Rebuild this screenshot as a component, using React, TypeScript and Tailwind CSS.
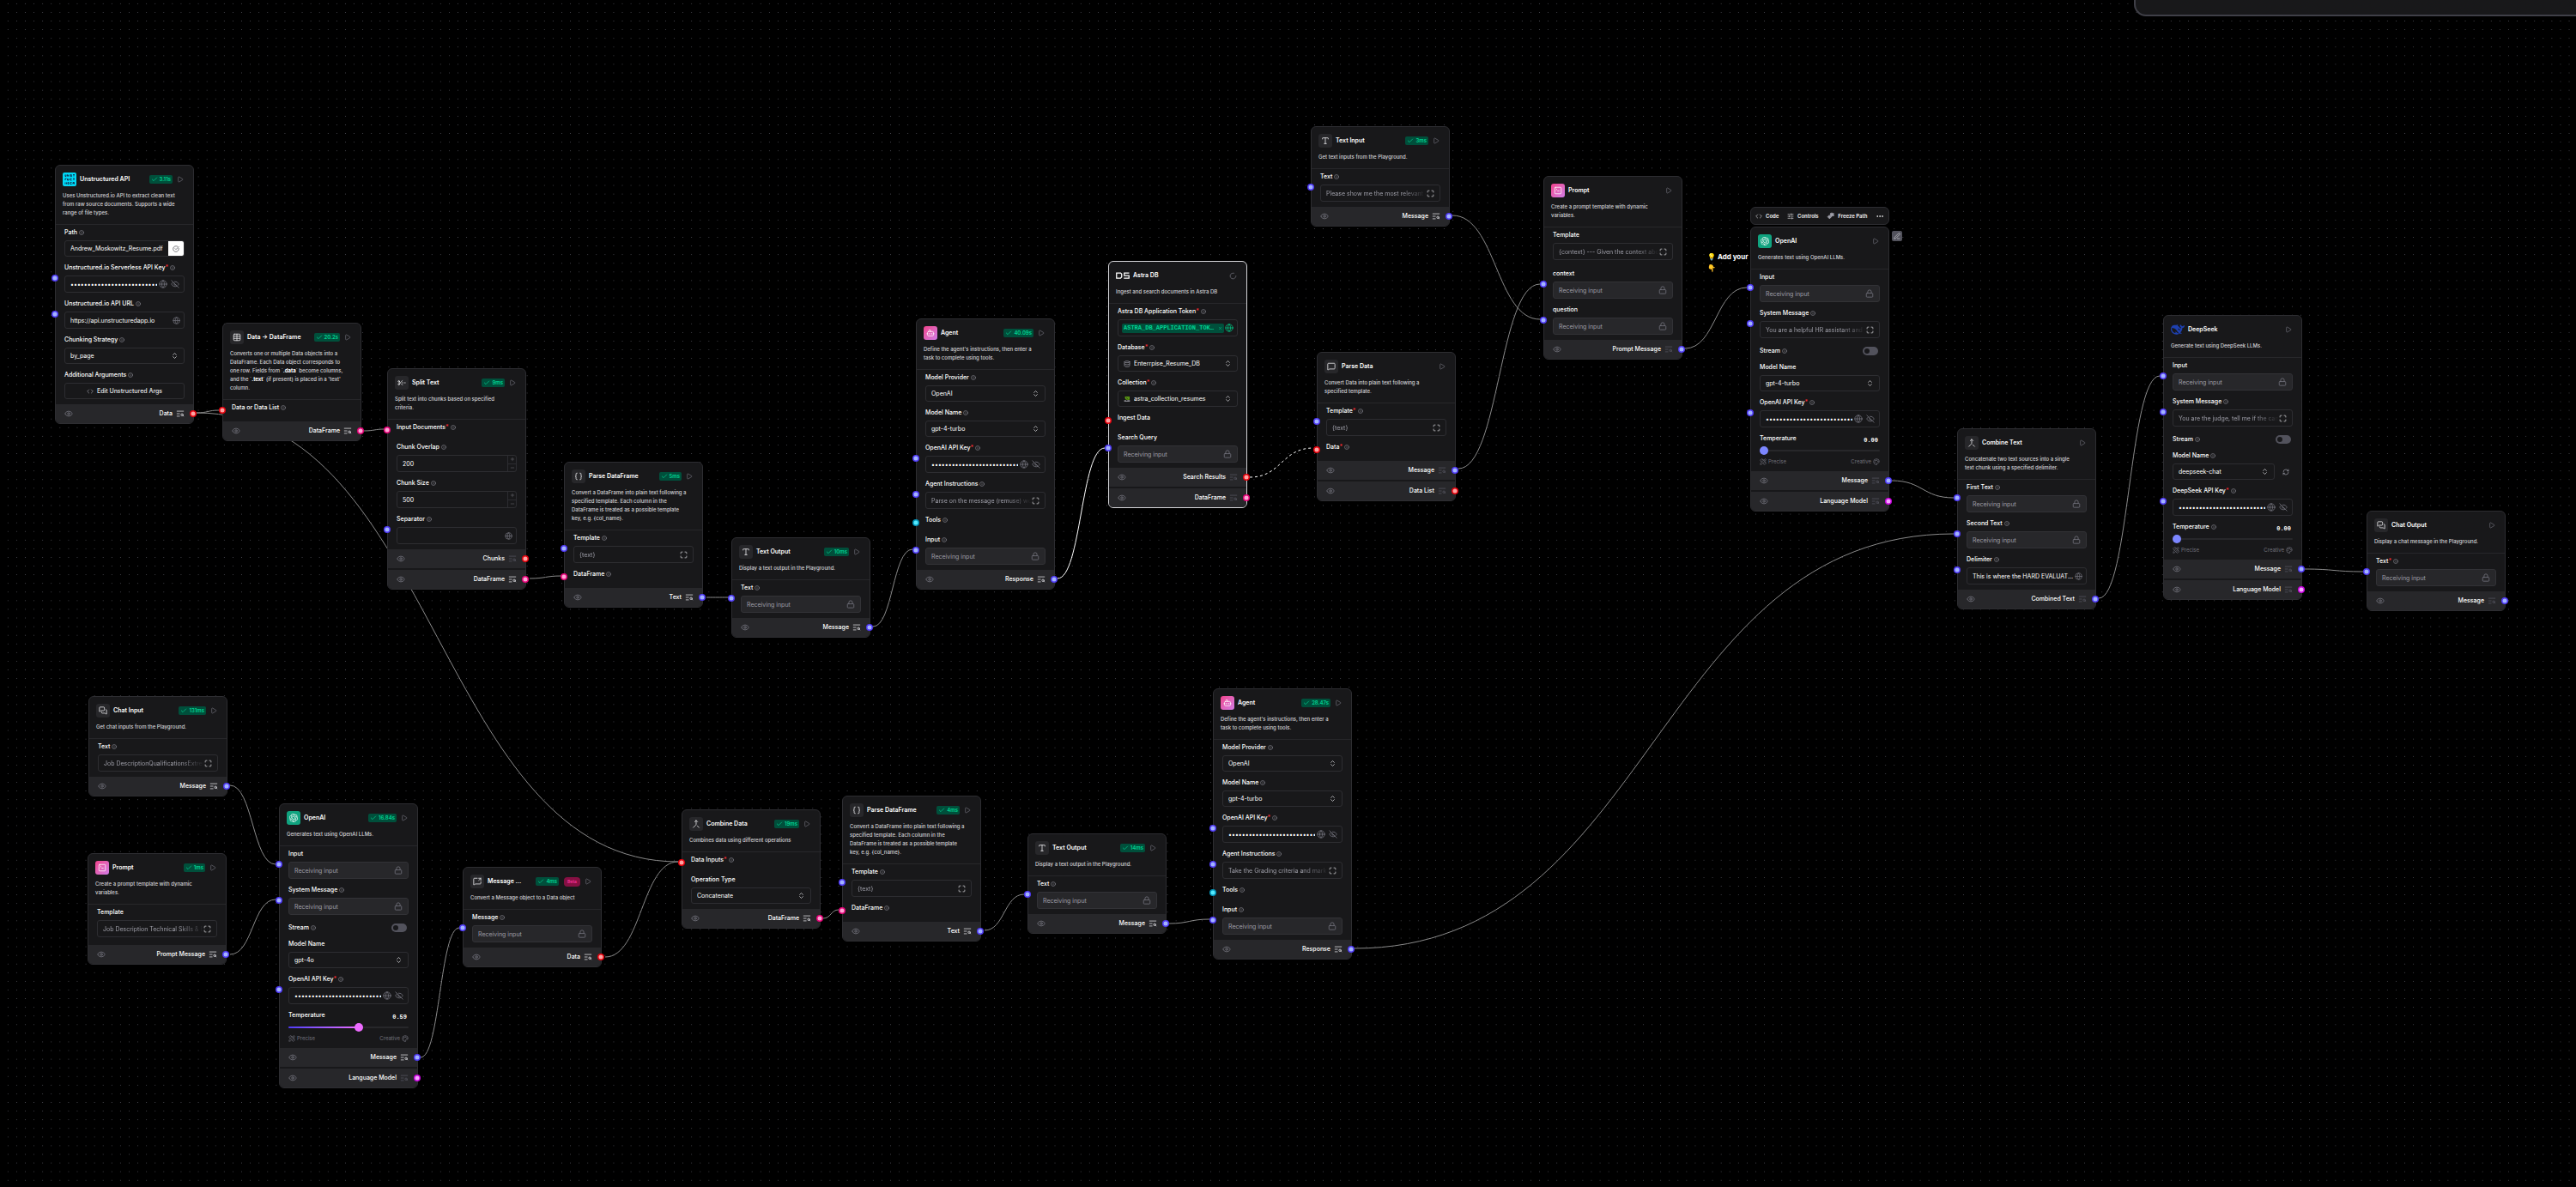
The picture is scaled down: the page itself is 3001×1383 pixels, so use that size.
import React, { useId } from "react";
import {
  Bot,
  Braces,
  Check,
  ChevronsUpDown,
  CircleCheckBig,
  Code,
  Database,
  Ellipsis,
  Eye,
  EyeOff,
  Globe,
  Info,
  LoaderCircle,
  Lock,
  Maximize,
  Merge,
  MessageSquare,
  MessageSquareShare,
  MessagesSquare,
  Minus,
  Palette,
  PencilRuler,
  PenLine,
  Play,
  Plus,
  RefreshCw,
  ScissorsLineDashed,
  SlidersHorizontal,
  SquareTerminal,
  Table,
  TextSearch,
  Type,
  X,
} from "lucide-react";
import { SiOpenai } from "react-icons/si";

type Tone = "indigo" | "red" | "pink" | "cyan" | "fuchsia";

type Field = {
  kind:
    | "port"
    | "receiving"
    | "text"
    | "preview"
    | "template"
    | "select"
    | "secret"
    | "file"
    | "number"
    | "args"
    | "token"
    | "toggle"
    | "slider";
  label: string;
  value?: string;
  handle?: Tone;
  info?: boolean;
  required?: boolean;
  icon?: "database" | "collection";
  refresh?: boolean;
};

type Output = { label: string; tone: Tone; active?: boolean };

type FlowNode = {
  id: string;
  x: number;
  y: number;
  title: string;
  icon: string;
  description: React.ReactNode[];
  time?: string;
  beta?: boolean;
  running?: boolean;
  fields: Field[];
  outputs: Output[];
};

const TONES: Record<Tone, string> = {
  indigo: "fill-indigo-300 stroke-indigo-600",
  red: "fill-red-300 stroke-red-600",
  pink: "fill-pink-300 stroke-pink-600",
  cyan: "fill-cyan-300 stroke-cyan-600",
  fuchsia: "fill-fuchsia-300 stroke-fuchsia-600",
};

const agentFields = (instructions: string): Field[] => [
  { kind: "select", label: "Model Provider", value: "OpenAI", info: true },
  { kind: "select", label: "Model Name", value: "gpt-4-turbo", info: true },
  { kind: "secret", label: "OpenAI API Key", required: true, info: true, handle: "indigo" },
  { kind: "preview", label: "Agent Instructions", value: instructions, info: true, handle: "indigo" },
  { kind: "port", label: "Tools", info: true, handle: "cyan" },
  { kind: "receiving", label: "Input", info: true, handle: "indigo" },
];

const parseFrameDescription = [
  "Convert a DataFrame into plain text following a",
  "specified template. Each column in the",
  "DataFrame is treated as a possible template",
  "key, e.g. {col_name}.",
];

const parseFrameFields: Field[] = [
  { kind: "preview", label: "Template", value: "{text}", info: true, handle: "indigo" },
  { kind: "port", label: "DataFrame", info: true, handle: "pink" },
];

const modelOutputs = (active: boolean): Output[] => [
  { label: "Message", tone: "indigo", active },
  { label: "Language Model", tone: "fuchsia" },
];

const NODES: FlowNode[] = [
  {
    id: "unstructured", x: 64, y: 192, title: "Unstructured API", icon: "unstructured", time: "3.11s",
    description: [
      "Uses Unstructured.io API to extract clean text",
      "from raw source documents. Supports a wide",
      "range of file types.",
    ],
    fields: [
      { kind: "file", label: "Path", value: "Andrew_Moskowitz_Resume.pdf", info: true },
      { kind: "secret", label: "Unstructured.io Serverless API Key", required: true, info: true, handle: "indigo" },
      { kind: "text", label: "Unstructured.io API URL", value: "https://api.unstructuredapp.io", info: true, handle: "indigo" },
      { kind: "select", label: "Chunking Strategy", value: "by_page", info: true },
      { kind: "args", label: "Additional Arguments", value: "Edit Unstructured Args", info: true },
    ],
    outputs: [{ label: "Data", tone: "red", active: true }],
  },
  {
    id: "to-frame", x: 259, y: 376, title: "Data → DataFrame", icon: "table", time: "20.2s",
    description: [
      "Converts one or multiple Data objects into a",
      "DataFrame. Each Data object corresponds to",
      <>one row. Fields from `<code className="font-[Inter] font-bold text-white">.data</code>` become columns,</>,
      <>and the `<code className="font-[Inter] font-bold text-white">.text</code>` (if present) is placed in a 'text'</>,
      "column.",
    ],
    fields: [{ kind: "port", label: "Data or Data List", info: true, handle: "red" }],
    outputs: [{ label: "DataFrame", tone: "pink", active: true }],
  },
  {
    id: "split", x: 451, y: 429, title: "Split Text", icon: "split", time: "9ms",
    description: ["Split text into chunks based on specified", "criteria."],
    fields: [
      { kind: "port", label: "Input Documents", required: true, info: true, handle: "pink" },
      { kind: "number", label: "Chunk Overlap", value: "200", info: true },
      { kind: "number", label: "Chunk Size", value: "500", info: true },
      { kind: "text", label: "Separator", value: "", info: true, handle: "indigo" },
    ],
    outputs: [
      { label: "Chunks", tone: "red" },
      { label: "DataFrame", tone: "pink", active: true },
    ],
  },
  {
    id: "parse-frame", x: 657, y: 538, title: "Parse DataFrame", icon: "braces", time: "5ms",
    description: parseFrameDescription,
    fields: parseFrameFields,
    outputs: [{ label: "Text", tone: "indigo", active: true }],
  },
  {
    id: "text-output", x: 852, y: 626, title: "Text Output", icon: "type", time: "10ms",
    description: ["Display a text output in the Playground."],
    fields: [{ kind: "receiving", label: "Text", info: true, handle: "indigo" }],
    outputs: [{ label: "Message", tone: "indigo", active: true }],
  },
  {
    id: "agent", x: 1067, y: 371, title: "Agent", icon: "bot", time: "40.09s",
    description: ["Define the agent's instructions, then enter a", "task to complete using tools."],
    fields: agentFields("Parse on the message (remuse) work"),
    outputs: [{ label: "Response", tone: "indigo", active: true }],
  },
  {
    id: "astra", x: 1291, y: 304, title: "Astra DB", icon: "astra", running: true,
    description: ["Ingest and search documents in Astra DB"],
    fields: [
      { kind: "token", label: "Astra DB Application Token", value: "ASTRA_DB_APPLICATION_TOK…", required: true, info: true },
      { kind: "select", label: "Database", value: "Enterrpise_Resume_DB", required: true, info: true, icon: "database" },
      { kind: "select", label: "Collection", value: "astra_collection_resumes", required: true, info: true, icon: "collection" },
      { kind: "port", label: "Ingest Data", handle: "red" },
      { kind: "receiving", label: "Search Query", handle: "indigo" },
    ],
    outputs: [
      { label: "Search Results", tone: "red" },
      { label: "DataFrame", tone: "pink" },
    ],
  },
  {
    id: "parse-data", x: 1534, y: 410, title: "Parse Data", icon: "message",
    description: ["Convert Data into plain text following a", "specified template."],
    fields: [
      { kind: "preview", label: "Template", value: "{text}", required: true, info: true, handle: "indigo" },
      { kind: "port", label: "Data", required: true, info: true, handle: "red" },
    ],
    outputs: [
      { label: "Message", tone: "indigo" },
      { label: "Data List", tone: "red" },
    ],
  },
  {
    id: "text-input", x: 1527, y: 147, title: "Text Input", icon: "type", time: "3ms",
    description: ["Get text inputs from the Playground."],
    fields: [{ kind: "preview", label: "Text", value: "Please show me the most relevant can", info: true, handle: "indigo" }],
    outputs: [{ label: "Message", tone: "indigo", active: true }],
  },
  {
    id: "prompt", x: 1798, y: 205, title: "Prompt", icon: "prompt",
    description: ["Create a prompt template with dynamic", "variables."],
    fields: [
      { kind: "template", label: "Template", value: "{context} --- Given the context above" },
      { kind: "receiving", label: "context", handle: "indigo" },
      { kind: "receiving", label: "question", handle: "indigo" },
    ],
    outputs: [{ label: "Prompt Message", tone: "indigo" }],
  },
  {
    id: "openai", x: 2039, y: 264, title: "OpenAI", icon: "openai",
    description: ["Generates text using OpenAI LLMs."],
    fields: [
      { kind: "receiving", label: "Input", handle: "indigo" },
      { kind: "preview", label: "System Message", value: "You are a helpful HR assistant and you", info: true, handle: "indigo" },
      { kind: "toggle", label: "Stream", info: true },
      { kind: "select", label: "Model Name", value: "gpt-4-turbo" },
      { kind: "secret", label: "OpenAI API Key", required: true, info: true, handle: "indigo" },
      { kind: "slider", label: "Temperature", value: "0.00" },
    ],
    outputs: modelOutputs(false),
  },
  {
    id: "combine-text", x: 2280, y: 499, title: "Combine Text", icon: "merge",
    description: ["Concatenate two text sources into a single", "text chunk using a specified delimiter."],
    fields: [
      { kind: "receiving", label: "First Text", info: true, handle: "indigo" },
      { kind: "receiving", label: "Second Text", info: true, handle: "indigo" },
      { kind: "text", label: "Delimiter", value: "This is where the HARD EVALUATION", info: true, handle: "indigo" },
    ],
    outputs: [{ label: "Combined Text", tone: "indigo" }],
  },
  {
    id: "deepseek", x: 2520, y: 367, title: "DeepSeek", icon: "deepseek",
    description: ["Generate text using DeepSeek LLMs."],
    fields: [
      { kind: "receiving", label: "Input", handle: "indigo" },
      { kind: "preview", label: "System Message", value: "You are the judge, tell me if the candid", info: true, handle: "indigo" },
      { kind: "toggle", label: "Stream", info: true },
      { kind: "select", label: "Model Name", value: "deepseek-chat", info: true, refresh: true },
      { kind: "secret", label: "DeepSeek API Key", required: true, info: true, handle: "indigo" },
      { kind: "slider", label: "Temperature", value: "0.00", info: true },
    ],
    outputs: modelOutputs(false),
  },
  {
    id: "chat-output", x: 2757, y: 595, title: "Chat Output", icon: "chat",
    description: ["Display a chat message in the Playground."],
    fields: [{ kind: "receiving", label: "Text", required: true, info: true, handle: "indigo" }],
    outputs: [{ label: "Message", tone: "indigo" }],
  },
  {
    id: "chat-input", x: 103, y: 811, title: "Chat Input", icon: "chat", time: "131ms",
    description: ["Get chat inputs from the Playground."],
    fields: [{ kind: "preview", label: "Text", value: "Job DescriptionQualificationsExtreme", info: true }],
    outputs: [{ label: "Message", tone: "indigo", active: true }],
  },
  {
    id: "prompt-2", x: 102, y: 994, title: "Prompt", icon: "prompt", time: "1ms",
    description: ["Create a prompt template with dynamic", "variables."],
    fields: [{ kind: "template", label: "Template", value: "Job Description Technical Skills & Exp" }],
    outputs: [{ label: "Prompt Message", tone: "indigo", active: true }],
  },
  {
    id: "openai-2", x: 325, y: 936, title: "OpenAI", icon: "openai", time: "16.84s",
    description: ["Generates text using OpenAI LLMs."],
    fields: [
      { kind: "receiving", label: "Input", handle: "indigo" },
      { kind: "receiving", label: "System Message", info: true, handle: "indigo" },
      { kind: "toggle", label: "Stream", info: true },
      { kind: "select", label: "Model Name", value: "gpt-4o" },
      { kind: "secret", label: "OpenAI API Key", required: true, info: true, handle: "indigo" },
      { kind: "slider", label: "Temperature", value: "0.59" },
    ],
    outputs: modelOutputs(true),
  },
  {
    id: "message", x: 539, y: 1010, title: "Message ...", icon: "share", time: "4ms", beta: true,
    description: ["Convert a Message object to a Data object"],
    fields: [{ kind: "receiving", label: "Message", info: true, handle: "indigo" }],
    outputs: [{ label: "Data", tone: "red", active: true }],
  },
  {
    id: "combine-data", x: 794, y: 943, title: "Combine Data", icon: "merge", time: "19ms",
    description: ["Combines data using different operations"],
    fields: [
      { kind: "port", label: "Data Inputs", required: true, info: true, handle: "red" },
      { kind: "select", label: "Operation Type", value: "Concatenate" },
    ],
    outputs: [{ label: "DataFrame", tone: "pink", active: true }],
  },
  {
    id: "parse-frame-2", x: 981, y: 927, title: "Parse DataFrame", icon: "braces", time: "4ms",
    description: parseFrameDescription,
    fields: parseFrameFields,
    outputs: [{ label: "Text", tone: "indigo", active: true }],
  },
  {
    id: "text-output-2", x: 1197, y: 971, title: "Text Output", icon: "type", time: "14ms",
    description: ["Display a text output in the Playground."],
    fields: [{ kind: "receiving", label: "Text", info: true, handle: "indigo" }],
    outputs: [{ label: "Message", tone: "indigo", active: true }],
  },
  {
    id: "agent-2", x: 1413, y: 802, title: "Agent", icon: "bot", time: "28.47s",
    description: ["Define the agent's instructions, then enter a", "task to complete using tools."],
    fields: agentFields("Take the Grading criteria and mark the"),
    outputs: [{ label: "Response", tone: "indigo", active: true }],
  },
];

type Edge = { from: [number, number]; to: [number, number]; style?: "live" | "dashed" };

const EDGES: Edge[] = [
  { from: [225, 481], to: [259, 478] },
  { from: [225, 481], to: [794, 1004] },
  { from: [420, 502], to: [452, 500] },
  { from: [613, 674], to: [658, 671] },
  { from: [819, 696], to: [853, 696] },
  { from: [1013, 730], to: [1067, 640] },
  { from: [1228, 674], to: [1291, 522], style: "live" },
  { from: [1452, 556], to: [1534, 522], style: "dashed" },
  { from: [1695, 546], to: [1798, 331] },
  { from: [1688, 251], to: [1798, 372] },
  { from: [1959, 406], to: [2039, 335] },
  { from: [2200, 560], to: [2280, 580] },
  { from: [1574, 1105], to: [2280, 622] },
  { from: [2441, 697], to: [2520, 438] },
  { from: [2681, 663], to: [2757, 666] },
  { from: [264, 915], to: [325, 1007] },
  { from: [264, 1112], to: [325, 1048] },
  { from: [486, 1232], to: [539, 1081] },
  { from: [701, 1115], to: [794, 1004] },
  { from: [955, 1070], to: [981, 1060] },
  { from: [1143, 1084], to: [1197, 1042] },
  { from: [1358, 1076], to: [1413, 1071] },
];

const edgePath = ({ from, to }: Edge) => {
  const sx = from[0] + 4;
  const tx = to[0] - 4;
  const half = (tx - sx) / 2;
  return `M${sx} ${from[1]}C${sx + half} ${from[1]} ${tx - half} ${to[1]} ${tx} ${to[1]}`;
};

const DeepSeekLogo = () => (
  <svg viewBox="0 0 24 24" className="size-4 fill-[#1e40af]" aria-hidden="true">
    <path d="M23.748 4.482c-.254-.124-.364.113-.512.234-.051.039-.094.09-.137.136-.372.397-.806.657-1.373.626-.829-.046-1.537.214-2.163.848-.133-.782-.575-1.248-1.247-1.548-.352-.156-.708-.311-.955-.65-.172-.241-.219-.51-.305-.774-.055-.16-.11-.323-.293-.35-.2-.031-.278.136-.356.276-.313.572-.434 1.202-.422 1.84.027 1.436.633 2.58 1.838 3.393.137.093.172.187.129.323-.082.28-.18.552-.266.833-.055.179-.137.217-.329.14a5.526 5.526 0 0 1-1.736-1.18c-.857-.828-1.631-1.742-2.597-2.458a11.365 11.365 0 0 0-.689-.471c-.985-.957.13-1.743.388-1.836.27-.098.093-.432-.779-.428-.872.004-1.67.295-2.687.684a3.055 3.055 0 0 1-.465.137 9.597 9.597 0 0 0-2.883-.102c-1.885.21-3.39 1.102-4.497 2.623C.082 8.606-.231 10.684.152 12.85c.403 2.284 1.569 4.175 3.36 5.653 1.858 1.533 3.997 2.284 6.438 2.14 1.482-.085 3.133-.284 4.994-1.86.47.234.962.327 1.78.397.63.059 1.236-.03 1.705-.128.735-.156.684-.837.419-.961-2.155-1.004-1.682-.595-2.113-.926 1.096-1.296 2.746-2.642 3.392-7.003.05-.347.007-.565 0-.845-.004-.17.035-.237.23-.256a4.173 4.173 0 0 0 1.545-.475c1.396-.763 1.96-2.015 2.093-3.517.02-.23-.004-.467-.247-.588zM11.581 18c-2.089-1.642-3.102-2.183-3.52-2.16-.392.024-.321.471-.235.763.09.288.207.486.371.739.114.167.192.416-.113.603-.673.416-1.842-.14-1.897-.167-1.361-.802-2.5-1.86-3.301-3.307-.774-1.393-1.224-2.887-1.298-4.482-.02-.386.093-.522.477-.592a4.696 4.696 0 0 1 1.529-.039c2.132.312 3.946 1.265 5.468 2.774.868.86 1.525 1.887 2.202 2.891.72 1.066 1.494 2.082 2.48 2.914.348.292.625.514.891.677-.802.09-2.14.11-3.054-.614zm1-6.44a.306.306 0 0 1 .415-.287.302.302 0 0 1 .2.288.306.306 0 0 1-.31.307.303.303 0 0 1-.304-.308zm3.11 1.596c-.2.081-.399.151-.59.16a1.245 1.245 0 0 1-.798-.254c-.274-.23-.47-.358-.552-.758a1.73 1.73 0 0 1 .016-.588c.07-.327-.008-.537-.239-.727-.187-.156-.426-.199-.688-.199a.559.559 0 0 1-.254-.078c-.11-.054-.2-.19-.114-.358.028-.054.16-.186.192-.21.356-.202.767-.136 1.146.016.352.144.618.408 1.001.782.391.451.462.576.685.914.176.265.336.537.445.848.067.195-.019.354-.25.452z" />
  </svg>
);

const AstraLogo = () => (
  <svg viewBox="0 0 32 32" className="size-4 fill-none stroke-white" strokeWidth="2.500" aria-hidden="true">
    <path d="M1.500 10H11l2.500 2.500v7L11 22H1.500z" />
    <path d="M31 10H19.500v6H30.500v6H18.500" />
  </svg>
);

const UnstructuredLogo = () => (
  <svg viewBox="0 0 32 32" className="size-4 rounded-[2px] bg-[#00d8f5] fill-none stroke-[#0e3a5c]" strokeWidth="2" aria-hidden="true">
    <path d="M6 5v4h2V5M11 9V5l3 4V5M21 5h-3v2h3v2h-3M24 5h4M26 5v4" />
    <path d="M6 18v-4h3M6 18M11 14v4h3v-4M18 18v-4h3M18 18h3M24 14h4M26 14v4" />
    <path d="M6 27v-4M9 23v4M12 23h2v4h-2zM21 23h-3v4h3M24 27v-4h3v4M24 25h3" />
  </svg>
);

const FreezeIcon = () => (
  <svg viewBox="0 0 24 24" className="size-[9px] shrink-0 fill-zinc-400 stroke-zinc-400" strokeWidth="2" aria-hidden="true">
    <path d="M3 15l5-5 6 6-5 5-3-3z" />
    <path d="M12 4h3l1-2 2 3 4-1-1 4 2 3-5 1-3 3-4-4z" />
  </svg>
);

const NodeIcon = ({ name }: { name: string }) => {
  const plain = "flex size-4 shrink-0 items-center justify-center rounded-[3px] bg-zinc-800 text-zinc-200";
  const pink =
    "flex size-4 shrink-0 items-center justify-center rounded-[3px] bg-linear-to-br from-[#f0408c] to-[#d17be6] text-white/90";
  const glyph = "size-[10px]";
  switch (name) {
    case "unstructured":
      return <span className="size-4 shrink-0"><UnstructuredLogo /></span>;
    case "astra":
      return <span className="size-4 shrink-0"><AstraLogo /></span>;
    case "deepseek":
      return <span className="size-4 shrink-0"><DeepSeekLogo /></span>;
    case "openai":
      return (
        <span className="flex size-4 shrink-0 items-center justify-center rounded-[3px] bg-[#10a37f] text-white/90">
          <SiOpenai className={glyph} />
        </span>
      );
    case "bot":
      return <span className={pink}><Bot className={glyph} /></span>;
    case "prompt":
      return <span className={pink}><SquareTerminal className={glyph} /></span>;
    case "table":
      return <span className={plain}><Table className={glyph} /></span>;
    case "split":
      return <span className={plain}><ScissorsLineDashed className={glyph} /></span>;
    case "braces":
      return <span className={plain}><Braces className={glyph} /></span>;
    case "type":
      return <span className={plain}><Type className={glyph} /></span>;
    case "message":
      return <span className={plain}><MessageSquare className={glyph} /></span>;
    case "share":
      return <span className={plain}><MessageSquareShare className={glyph} /></span>;
    case "merge":
      return <span className={plain}><Merge className={glyph} /></span>;
    default:
      return <span className={plain}><MessagesSquare className={glyph} /></span>;
  }
};

const Handle = ({ tone, side }: { tone: Tone; side: "left" | "right" }) => (
  <svg
    viewBox="0 0 16 16"
    strokeWidth="3"
    aria-hidden="true"
    className={`absolute top-1/2 z-10 size-2 -translate-y-1/2 ${TONES[tone]} ${
      side === "left" ? "-left-[15px]" : "-right-1"
    }`}
  >
    <circle cx="8" cy="8" r="6.500" />
  </svg>
);

const CollectionIcon = () => (
  <svg viewBox="0 0 24 24" className="size-2 shrink-0" aria-hidden="true">
    <path d="M5 3h16v11H9c-4-2-5-7-4-11z" fill="#5d9c12" />
    <path d="M2 16h6l3 3 3-3h8v5H2z" fill="#8b8b92" />
    <path d="M9 7l4 3 3-2" stroke="#18181b" strokeWidth="2" fill="none" />
  </svg>
);

const BOX = "flex w-full items-center rounded-[3px] border";
const TEXT_INPUT = "h-full min-w-0 flex-1 bg-transparent text-[7px] leading-[10px] outline-none";

const Control = ({ field, id }: { field: Field; id: string }) => {
  switch (field.kind) {
    case "receiving":
      return (
        <div className={`${BOX} h-5 border-[#323236] bg-zinc-800 px-1.5`}>
          <input id={id} readOnly disabled value="Receiving input" className={`${TEXT_INPUT} text-zinc-400`} />
          <Lock className="size-[10px] shrink-0 text-zinc-500" />
        </div>
      );
    case "preview":
    case "template":
      return (
        <div className={`${BOX} h-5 border-[#2d2d31] px-1.5`}>
          <input
            id={id}
            readOnly
            value={field.value}
            className={`${TEXT_INPUT} mask-r-from-75% mask-r-to-100% text-zinc-400`}
          />
          <Maximize className="size-[9px] shrink-0 text-zinc-300" />
        </div>
      );
    case "select":
      return (
        <div className="flex items-center">
          <div className={`${BOX} relative h-[19px] border-[#2d2d31]`}>
            {field.icon === "database" && <Database className="ml-1.5 size-2 shrink-0 text-zinc-400" />}
            {field.icon === "collection" && <span className="ml-1.5 flex"><CollectionIcon /></span>}
            <select
              id={id}
              className={`h-full min-w-0 flex-1 appearance-none bg-transparent text-[7px] leading-[10px] text-white outline-none ${
                field.icon ? "pl-1" : "pl-1.5"
              }`}
            >
              <option>{field.value}</option>
            </select>
            <ChevronsUpDown className="pointer-events-none absolute right-1.5 size-[9px] text-zinc-300" />
          </div>
          {field.refresh && (
            <button aria-label="Refresh models" className="mr-1 ml-[9px] shrink-0 text-zinc-400">
              <RefreshCw className="size-2" />
            </button>
          )}
        </div>
      );
    case "secret":
      return (
        <div className={`${BOX} h-5 border-[#2d2d31] pr-[5px] pl-1.5`}>
          <input
            id={id}
            type="password"
            readOnly
            value="sk-proj-placeholder-value-000000000000"
            className={`${TEXT_INPUT} text-white`}
          />
          <Globe className="ml-[2px] size-[10px] shrink-0 text-zinc-500" />
          <EyeOff className="ml-1 size-[10px] shrink-0 text-zinc-500" />
        </div>
      );
    case "text":
      return (
        <div className={`${BOX} h-5 border-[#2d2d31] pr-1 pl-1.5`}>
          <input id={id} readOnly value={field.value} className={`${TEXT_INPUT} text-ellipsis text-white`} />
          <Globe className="size-[9px] shrink-0 text-zinc-500" />
        </div>
      );
    case "file":
      return (
        <div className={`${BOX} h-[19px] overflow-hidden border-[#2d2d31] pl-1.5`}>
          <input id={id} readOnly value={field.value} className={`${TEXT_INPUT} text-white`} />
          <button aria-label="Choose file" className="flex h-[19px] w-[18px] shrink-0 items-center justify-center bg-white text-zinc-700">
            <CircleCheckBig className="size-2" />
          </button>
        </div>
      );
    case "number":
      return (
        <div className={`${BOX} h-5 border-[#2d2d31] pl-1.5`}>
          <input id={id} readOnly inputMode="numeric" value={field.value} className={`${TEXT_INPUT} text-white`} />
          <span className="flex h-full w-[10px] shrink-0 flex-col border-l border-[#2d2d31] text-zinc-500">
            <button aria-label="Increase" className="flex flex-1 items-center justify-center border-b border-[#2d2d31]">
              <Plus className="size-1.5" />
            </button>
            <button aria-label="Decrease" className="flex flex-1 items-center justify-center">
              <Minus className="size-1.5" />
            </button>
          </span>
        </div>
      );
    case "args":
      return (
        <button
          id={id}
          className={`${BOX} h-[19px] justify-center gap-1 border-[#2d2d31] text-[7px] leading-[10px] font-medium text-zinc-200`}
        >
          <Code className="size-2 text-zinc-400" />
          {field.value}
        </button>
      );
    case "token":
      return (
        <div className={`${BOX} h-5 border-[#2d2d31] px-1`}>
          <span className="flex h-[11px] min-w-0 flex-1 items-center rounded-[2px] bg-emerald-900 pl-[2px] text-emerald-400">
            <input
              id={id}
              readOnly
              value={field.value}
              className="min-w-0 flex-1 bg-transparent font-['Liberation_Mono',monospace] text-[7px] leading-[10px] font-bold outline-none"
            />
            <button aria-label="Clear token" className="mx-[2px]">
              <X className="size-[5px]" />
            </button>
          </span>
          <Globe className="ml-px size-[10px] shrink-0 text-emerald-500" />
        </div>
      );
    default:
      return null;
  }
};

const FieldLabel = ({ field, id }: { field: Field; id: string }) => (
  <div className="flex h-[10px] items-center gap-[2px] text-[7px] leading-[10px] font-medium whitespace-nowrap text-white">
    <label htmlFor={id}>
      {field.label}
      {field.required && <span className="text-red-500">*</span>}
    </label>
    {field.info && <Info className="size-1.5 shrink-0 text-zinc-400" />}
  </div>
);

const FieldRow = ({ field }: { field: Field }) => {
  const id = useId();

  if (field.kind === "port") {
    return (
      <div className="relative h-[15px]">
        {field.handle && <Handle tone={field.handle} side="left" />}
        <FieldLabel field={field} id={id} />
      </div>
    );
  }

  if (field.kind === "toggle") {
    return (
      <div className="flex h-[13px] items-center justify-between pr-[2px]">
        <FieldLabel field={field} id={id} />
        <input
          id={id}
          type="checkbox"
          role="switch"
          className="h-[10px] w-[18px] appearance-none rounded-full bg-zinc-600 p-[2px] before:block before:size-1.5 before:rounded-full before:bg-zinc-900"
        />
      </div>
    );
  }

  if (field.kind === "slider") {
    const value = Number(field.value);
    return (
      <div>
        <div className="flex h-[14px] items-start justify-between">
          <FieldLabel field={field} id={id} />
          <output className="pt-[2px] pr-[2px] font-['Liberation_Mono',monospace] text-[7px] leading-[10px] font-bold text-white">
            {field.value}
          </output>
        </div>
        <div className="relative flex h-[10px] items-center">
          <div className="h-[2px] w-full rounded-full bg-zinc-800">
            <div
              className="h-full rounded-full bg-linear-to-r from-indigo-600 to-fuchsia-400"
              style={{ width: `${value * 100}%` }}
            />
          </div>
          <input
            id={id}
            type="range"
            min="0"
            max="1"
            step="0.01"
            defaultValue={value}
            className={`absolute inset-0 h-[10px] w-full appearance-none bg-transparent [&::-webkit-slider-thumb]:size-[10px] [&::-webkit-slider-thumb]:appearance-none [&::-webkit-slider-thumb]:rounded-full ${
              value > 0 ? "[&::-webkit-slider-thumb]:bg-fuchsia-400" : "[&::-webkit-slider-thumb]:bg-indigo-400"
            }`}
          />
        </div>
        <div className="mt-[3px] flex h-[10px] items-center justify-between text-[6px] leading-[10px] text-zinc-500">
          <span className="flex items-center gap-[2px]">
            <PencilRuler className="size-2" />
            Precise
          </span>
          <span className="flex items-center gap-[2px]">
            Creative
            <Palette className="size-2" />
          </span>
        </div>
      </div>
    );
  }

  return (
    <div className={field.kind === "template" ? "pb-[3px]" : ""}>
      <div className="relative flex flex-col gap-1">
        {field.handle && <Handle tone={field.handle} side="left" />}
        <FieldLabel field={field} id={id} />
        <Control field={field} id={id} />
      </div>
    </div>
  );
};

const NodeCard = ({ node }: { node: FlowNode }) => (
  <article
    className={`absolute w-[162px] rounded-md border bg-[#18181a] ${node.running ? "border-zinc-300" : "border-[#2d2d31]"}`}
    style={{ left: node.x, top: node.y }}
  >
    <header className="flex flex-col gap-1.5 border-b border-zinc-800 p-2">
      <div className="flex h-4 items-center">
        <NodeIcon name={node.icon} />
        <h2 className="ml-1 flex-1 text-[7px] leading-[10px] font-semibold whitespace-nowrap text-white">{node.title}</h2>
        {node.time && (
          <span className="flex h-[10px] items-center gap-[2px] rounded-[2px] bg-emerald-900 px-[2px] text-[6px] leading-[10px] font-semibold text-emerald-400">
            <Check className="size-2" />
            {node.time}
          </span>
        )}
        {node.beta && (
          <span className="ml-1.5 flex h-[11px] items-center rounded-[4px] bg-pink-900 px-1 text-[5px] leading-[10px] font-semibold text-pink-500">
            Beta
          </span>
        )}
        <button aria-label={`Run ${node.title}`} className="mr-[3px] ml-[5px] shrink-0 text-zinc-500">
          {node.running ? <LoaderCircle className="size-[9px]" /> : <Play className="size-2" />}
        </button>
      </div>
      <p className="text-[6px] leading-[10px] font-medium whitespace-nowrap text-zinc-300">
        {node.description.map((line, i) => (
          <span key={i} className="block">
            {line}
          </span>
        ))}
      </p>
    </header>
    <div className="flex flex-col gap-2 px-[10px] pt-1 pb-1.5">
      {node.fields.map((field) => (
        <FieldRow key={field.label} field={field} />
      ))}
    </div>
    <footer className="flex flex-col gap-[2px]">
      {node.outputs.map((output) => (
        <div key={output.label} className="relative flex h-[22px] items-center justify-between bg-zinc-800 px-[10px] last:rounded-b-[5px]">
          <button aria-label={`Hide ${output.label}`} className="text-zinc-500">
            <Eye className="size-[10px]" />
          </button>
          <span className="flex items-center gap-1 text-[7px] leading-[10px] font-medium text-white">
            {output.label}
            <TextSearch className={`size-[10px] ${output.active ? "text-zinc-300" : "text-zinc-600"}`} />
          </span>
          <Handle tone={output.tone} side="right" />
        </div>
      ))}
    </footer>
  </article>
);

const Toolbar = () => (
  <div
    role="toolbar"
    aria-label="Node actions"
    className="absolute top-[241px] left-[2039px] flex h-[21px] w-[162px] items-center justify-between rounded-md border border-[#2d2d31] bg-[#18181a] px-[5px] text-[6px] leading-[10px] font-semibold text-zinc-100"
  >
    <button className="flex items-center gap-1">
      <Code className="size-2 text-zinc-300" />
      Code
    </button>
    <button className="flex items-center gap-1">
      <SlidersHorizontal className="size-2 text-zinc-300" />
      Controls
    </button>
    <button className="flex items-center gap-1">
      <FreezeIcon />
      Freeze Path
    </button>
    <button aria-label="More actions">
      <Ellipsis className="size-[10px]" />
    </button>
  </div>
);

export default function App() {
  return (
    <main className="relative min-h-screen w-full overflow-hidden bg-black font-[Inter,sans-serif]">
      <svg className="absolute inset-0 size-full" aria-hidden="true">
        <defs>
          <pattern id="dots" width="20" height="20" patternUnits="userSpaceOnUse" patternTransform="translate(4.3 -0.7) scale(0.504)">
            <circle cx="10" cy="10" r="1" className="fill-zinc-600" />
          </pattern>
        </defs>
        <rect width="100%" height="100%" fill="url(#dots)" />
        {EDGES.map((edge, i) => (
          <path
            key={i}
            d={edgePath(edge)}
            fill="none"
            className={edge.style ? "stroke-white" : "stroke-[#8a8a8a]"}
            strokeWidth="1"
            strokeDasharray={edge.style === "dashed" ? "3 3" : undefined}
          />
        ))}
      </svg>

      <p className="absolute top-[293px] left-[1989px] text-[8px] leading-[13px] font-bold whitespace-nowrap text-white">
        💡 Add your
        <br />
        👇
      </p>

      {NODES.map((node) => (
        <NodeCard key={node.id} node={node} />
      ))}

      <Toolbar />
      <button
        aria-label="Edit node"
        className="absolute top-[269px] left-[2204px] flex size-3 items-center justify-center rounded-[2px] bg-zinc-600 text-zinc-300"
      >
        <PenLine className="size-2" />
      </button>

      <aside className="absolute top-0 right-0 left-[2486px] h-[19px] rounded-bl-[14px] border-b-2 border-l-2 border-zinc-700 bg-[#18181a]" />
    </main>
  );
}
